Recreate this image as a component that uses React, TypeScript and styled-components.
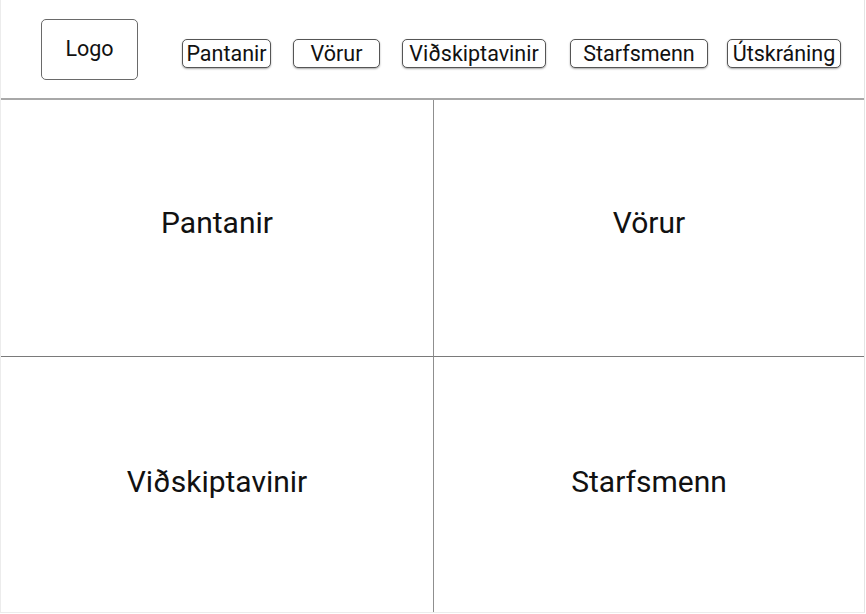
import React from "react";
import styled, { createGlobalStyle } from "styled-components";

const Global = createGlobalStyle`
  html, body { margin: 0; padding: 0; background: #fff; }
  body { font-family: Roboto, "Liberation Sans", Arial, sans-serif; color: #111; }
`;

const Page = styled.div`
  width: 865px;
  height: 613px;
  border-left: 1px solid #ececec;
  border-right: 1px solid #e4e4e4;
  border-bottom: 1px solid #ececec;
  display: flex;
  flex-direction: column;
  box-sizing: border-box;
`;

const Header = styled.header`
  height: 98px;
  flex: none;
  border-bottom: 2px solid #a8a8a8;
  display: flex;
  align-items: flex-start;
  padding-left: 40px;
`;

const LogoBox = styled.div`
  margin-top: 19px;
  width: 97px;
  height: 61px;
  box-sizing: border-box;
  border: 1px solid #6a6a6a;
  border-radius: 5px;
  display: flex;
  align-items: center;
  justify-content: center;
  font-size: 21.5px;
  padding-bottom: 2px;
`;

const Nav = styled.nav`
  display: flex;
  margin-top: 39px;
  margin-left: 44px;
`;

const NavButton = styled.button<{ $w: number; $ml: number }>`
  width: ${(p) => p.$w}px;
  margin-left: ${(p) => p.$ml}px;
  height: 29px;
  box-sizing: border-box;
  border: 1px solid #555;
  border-radius: 5px;
  background: #fff;
  box-shadow: 0 1px 2px rgba(0, 0, 0, 0.35);
  font-family: Roboto, "Liberation Sans", Arial, sans-serif;
  font-size: 21.5px;
  color: #111;
  padding: 1px 0 0;
  display: flex;
  align-items: center;
  justify-content: center;
  line-height: 1;
`;

const Grid = styled.main`
  flex: 1;
  display: grid;
  grid-template-columns: 432px 1fr;
  grid-template-rows: 257px 1fr;
`;

const Cell = styled.section<{ $right?: boolean; $top?: boolean }>`
  display: flex;
  align-items: center;
  justify-content: center;
  font-size: 30px;
  border-left: ${(p) => (p.$right ? "1px solid #8f8f8f" : "none")};
  border-bottom: ${(p) => (p.$top ? "1px solid #7a7a7a" : "none")};
  padding-bottom: ${(p) => (p.$top ? 12 : 6)}px;
  box-sizing: border-box;
`;

const items = [
  { label: "Pantanir", w: 89, ml: 0 },
  { label: "Vörur", w: 87, ml: 22 },
  { label: "Viðskiptavinir", w: 144, ml: 22 },
  { label: "Starfsmenn", w: 138, ml: 24 },
  { label: "Útskráning", w: 114, ml: 19 },
];

export default function App() {
  return (
    <>
      <Global />
      <Page>
        <Header>
          <LogoBox>Logo</LogoBox>
          <Nav>
            {items.map((it) => (
              <NavButton key={it.label} $w={it.w} $ml={it.ml}>
                {it.label}
              </NavButton>
            ))}
          </Nav>
        </Header>
        <Grid>
          <Cell $top>Pantanir</Cell>
          <Cell $top $right>Vörur</Cell>
          <Cell>Viðskiptavinir</Cell>
          <Cell $right>Starfsmenn</Cell>
        </Grid>
      </Page>
    </>
  );
}
